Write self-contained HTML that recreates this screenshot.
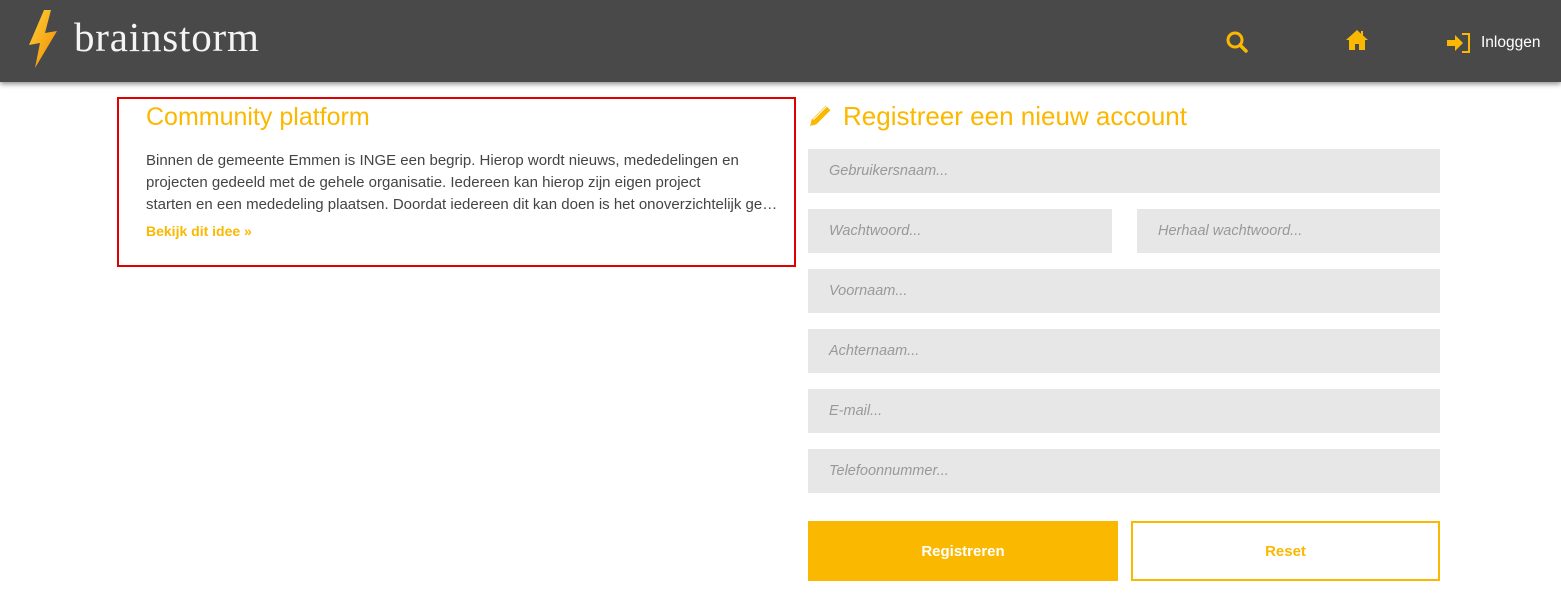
<!DOCTYPE html>
<html><head><meta charset="utf-8"><style>
*{margin:0;padding:0;box-sizing:border-box}
body{width:1561px;height:607px;background:#fff;font-family:"Liberation Sans",sans-serif;position:relative;overflow:hidden}
.hdr{position:absolute;left:0;top:0;width:1561px;height:82px;background:#494949;box-shadow:0 2px 5px rgba(0,0,0,.45)}
.logo{position:absolute;left:74px;top:13px;font-family:"Liberation Serif",serif;font-size:41px;color:#f4f4f4;letter-spacing:.8px}
.box{position:absolute;left:117px;top:97px;width:679px;height:170px;border:2px solid #e00000}
.t1{position:absolute;left:27px;top:4px;font-size:25px;color:#fbb800}
.p{position:absolute;left:27px;top:51px;width:634px;font-size:15px;line-height:22px;color:#444}
.p div{white-space:nowrap;overflow:hidden;text-overflow:ellipsis}
.lnk{position:absolute;left:27px;top:124px;font-size:14px;font-weight:bold;color:#fbb800}
.t2{position:absolute;left:843px;top:101px;font-size:26px;color:#fbb800}
.in{position:absolute;background:#e7e7e7;height:44px;font-style:italic;font-size:14.5px;color:#999;padding-left:21px;line-height:44px}
.btn{position:absolute;top:521px;height:60px;font-size:15px;font-weight:bold;text-align:center;line-height:62px}
</style></head><body>
<div class="hdr">
<svg style="position:absolute;left:26px;top:9px" width="34" height="60" viewBox="0 0 34 60"><defs><linearGradient id="g" x1="0" y1="0" x2="1" y2="1"><stop offset="0" stop-color="#ffd23a"/><stop offset="1" stop-color="#f08a00"/></linearGradient></defs><path d="M18 1 L3 36 L14 34 L9 59 L31 22 L19 24 L25 1 Z" fill="url(#g)"/></svg>
<div class="logo">brainstorm</div>
<svg style="position:absolute;left:1225px;top:30px" width="24" height="24" viewBox="0 0 24 24"><circle cx="10" cy="10" r="7" fill="none" stroke="#fbb800" stroke-width="3"/><path d="M15 15 L21 21" stroke="#fbb800" stroke-width="3.5" stroke-linecap="round"/></svg>
<svg style="position:absolute;left:1345px;top:29px" width="24" height="22" viewBox="0 0 24 22"><path d="M12 1 L1 11 L4 11 L4 21 L10 21 L10 15 L14 15 L14 21 L20 21 L20 11 L23 11 L18 6.5 L18 2 L16 2 L16 4.7 Z" fill="#fbb800"/></svg>
<svg style="position:absolute;left:1446px;top:32px" width="26" height="22" viewBox="0 0 26 22"><path d="M1 8 L9 8 L9 3 L17 11 L9 19 L9 14 L1 14 Z" fill="#fbb800"/><path d="M16 2 L23 2 L23 20 L16 20" fill="none" stroke="#fbb800" stroke-width="2"/></svg>
<div style="position:absolute;left:1481px;top:34px;font-size:15.5px;color:#fff">Inloggen</div>
</div>
<div class="box">
<div class="t1">Community platform</div>
<div class="p"><div>Binnen de gemeente Emmen is INGE een begrip. Hierop wordt nieuws, mededelingen en</div><div>projecten gedeeld met de gehele organisatie. Iedereen kan hierop zijn eigen project</div><div>starten en een mededeling plaatsen. Doordat iedereen dit kan doen is het onoverzichtelijk geworden</div></div>
<div class="lnk">Bekijk dit idee »</div>
</div>
<svg style="position:absolute;left:808px;top:103px" width="25" height="25" viewBox="0 0 24 24"><path d="M2 22 L3.5 16 L17 2.5 L21.5 7 L8 20.5 Z" fill="#fbb800"/><path d="M5 16 L18.5 2.5" stroke="#fff" stroke-width="1"/></svg>
<div class="t2">Registreer een nieuw account</div>
<div class="in" style="left:808px;top:149px;width:632px">Gebruikersnaam...</div>
<div class="in" style="left:808px;top:209px;width:304px">Wachtwoord...</div>
<div class="in" style="left:1137px;top:209px;width:303px">Herhaal wachtwoord...</div>
<div class="in" style="left:808px;top:269px;width:632px">Voornaam...</div>
<div class="in" style="left:808px;top:329px;width:632px">Achternaam...</div>
<div class="in" style="left:808px;top:389px;width:632px">E-mail...</div>
<div class="in" style="left:808px;top:449px;width:632px">Telefoonnummer...</div>
<div class="btn" style="left:808px;width:310px;background:#fbb800;color:#fff">Registreren</div>
<div class="btn" style="left:1131px;width:309px;border:2px solid #fbb800;color:#fbb800;line-height:58px">Reset</div>
</body></html>
